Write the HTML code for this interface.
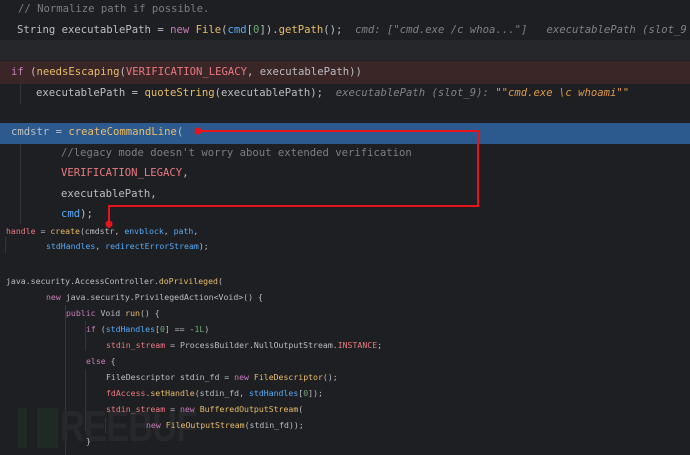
<!DOCTYPE html>
<html><head><meta charset="utf-8"><style>
body{margin:0;width:690px;height:455px;background:#1e1f22;overflow:hidden;position:relative;font-family:"DejaVu Sans Mono","Liberation Mono",monospace;color:#bcbec4}
.l{position:absolute;white-space:pre;left:0}
.a{font-size:10.6px}
.b{font-size:8.2px}
.k{color:#c77dbb}.f{color:#e8bd6a}.c{color:#7a7e85}.r{color:#e87a80}.p{color:#56a8f5}.n{color:#6aab73}.h{color:#7f8288;font-style:italic}.s{color:#e09a4a;font-style:italic}
.g{position:absolute;width:1px;background:#33353a}
</style></head><body>
<div style="position:absolute;left:0;top:40px;width:690px;height:20px;background:#25272b"></div>
<div style="position:absolute;left:0;top:61px;width:690px;height:23px;background:#3a2527"></div>
<div style="position:absolute;left:0;top:123px;width:690px;height:21px;background:#2d5a8e"></div>
<div class="g" style="left:20px;top:84px;height:20px"></div>
<div class="g" style="left:20px;top:144px;height:80px"></div>
<div class="g" style="left:5px;top:237px;height:16px"></div>
<div class="g" style="left:65px;top:305px;height:150px"></div>
<div class="g" style="left:85px;top:321px;height:30px"></div>
<div class="g" style="left:85px;top:369px;height:62px"></div>
<div class="g" style="left:105px;top:417px;height:16px"></div>
<div style="position:absolute;left:18px;top:408px;width:9px;height:40px;background:#1f2a24"></div>
<div style="position:absolute;left:37px;top:408px;width:21px;height:40px;background:#1f2a24"></div>
<div style="position:absolute;left:60px;top:404px;font:bold 44px 'Liberation Sans',sans-serif;color:#27282c;letter-spacing:-1px;line-height:46px;transform:scaleX(0.78);transform-origin:left">REEBUF</div>

<div class="l a c" style="left:18px;top:3px">// Normalize path if possible.</div>
<div class="l a" style="left:17px;top:24px">String executablePath = <span class="k">new</span> <span class="f">File</span>(<span class="p">cmd</span>[<span class="n">0</span>]).<span class="f">getPath</span>();  <span class="h">cmd: ["cmd.exe /c whoa..."]   executablePath (slot_9</span></div>
<div class="l a" style="left:11px;top:66px"><span class="k">if</span> (<span class="f">needsEscaping</span>(<span class="r">VERIFICATION_LEGACY</span>, executablePath))</div>
<div class="l a" style="left:36px;top:87px">executablePath = <span class="f">quoteString</span>(executablePath);  <span class="h">executablePath (slot_9): </span><span class="s">""cmd.exe \c whoami""</span></div>
<div class="l a" style="left:11px;top:126px">cmdstr = <span class="f">createCommandLine</span>(</div>
<div class="l a c" style="left:61px;top:147px">//legacy mode doesn't worry about extended verification</div>
<div class="l a r" style="left:61px;top:167px">VERIFICATION_LEGACY<span style="color:#bcbec4">,</span></div>
<div class="l a" style="left:61px;top:188px">executablePath,</div>
<div class="l a" style="left:61px;top:208px"><span class="p">cmd</span>);</div>

<div class="l b" style="left:6px;top:226px"><span class="r">handle</span> = <span class="f">create</span>(cmdstr, <span class="p">envblock</span>, <span class="p">path</span>,</div>
<div class="l b" style="left:46px;top:241px"><span class="p">stdHandles</span>, <span class="p">redirectErrorStream</span>);</div>
<div class="l b" style="left:6px;top:276px">java.security.AccessController.<span class="f">doPrivileged</span>(</div>
<div class="l b" style="left:46px;top:292px"><span class="k">new</span> java.security.PrivilegedAction&lt;Void&gt;() {</div>
<div class="l b" style="left:66px;top:308px"><span class="k">public</span> Void <span class="f">run</span>() {</div>
<div class="l b" style="left:86px;top:324px"><span class="k">if</span> (<span class="p">stdHandles</span>[<span class="n">0</span>] == -<span class="n">1L</span>)</div>
<div class="l b" style="left:106px;top:340px"><span class="r">stdin_stream</span> = ProcessBuilder.NullOutputStream.<span class="r">INSTANCE</span>;</div>
<div class="l b" style="left:86px;top:356px"><span class="k">else</span> {</div>
<div class="l b" style="left:106px;top:372px">FileDescriptor stdin_fd = <span class="k">new</span> <span class="f">FileDescriptor</span>();</div>
<div class="l b" style="left:106px;top:388px"><span class="r">fdAccess</span>.<span class="f">setHandle</span>(stdin_fd, <span class="p">stdHandles</span>[<span class="n">0</span>]);</div>
<div class="l b" style="left:106px;top:404px"><span class="r">stdin_stream</span> = <span class="k">new</span> <span class="f">BufferedOutputStream</span>(</div>
<div class="l b" style="left:146px;top:420px"><span class="k">new</span> <span class="f">FileOutputStream</span>(stdin_fd));</div>
<div class="l b" style="left:86px;top:436px">}</div>

<svg style="position:absolute;left:0;top:0" width="690" height="455">
<path d="M198 131 H478 V206 H109 V228" fill="none" stroke="#e8141c" stroke-width="2"/>
<circle cx="198" cy="131" r="3.5" fill="#e8141c"/>
<circle cx="109" cy="224" r="3.5" fill="#e8141c"/>
</svg>
</body></html>
